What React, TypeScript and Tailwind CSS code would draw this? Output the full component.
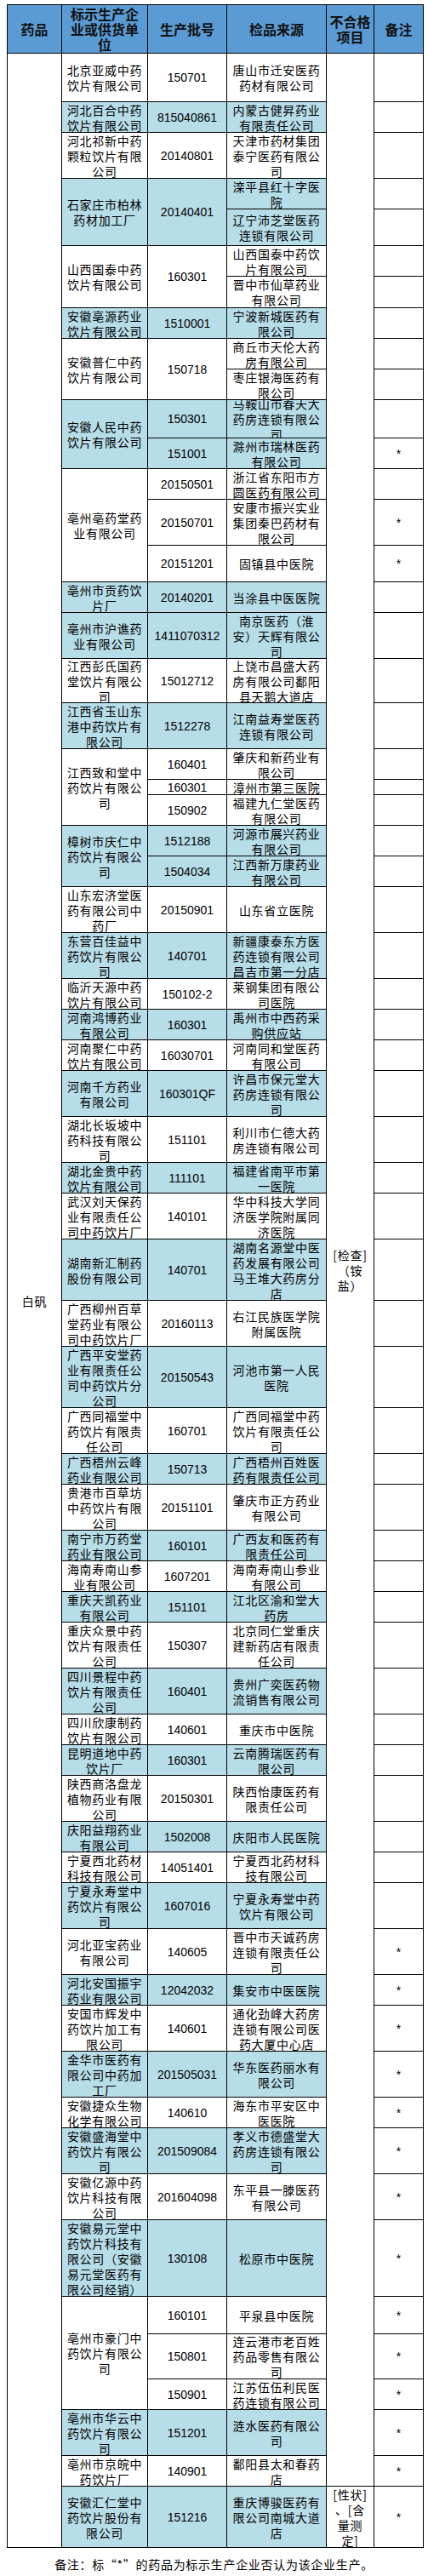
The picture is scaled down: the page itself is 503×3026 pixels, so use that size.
import React from 'react';

type Sub = { b?: string; bs?: number; src: string; star?: boolean };
type Co = { n: string; s: boolean; subs: Sub[] };

const DATA: Co[] = [
  { n: '北京亚威中药|饮片有限公司', s: false, subs: [{ b: '150701', src: '唐山市迁安医药|药材有限公司' }] },
  { n: '河北百合中药|饮片有限公司', s: true, subs: [{ b: '815040861', src: '内蒙古健昇药业|有限责任公司' }] },
  { n: '河北祁新中药|颗粒饮片有限|公司', s: false, subs: [{ b: '20140801', src: '天津市药材集团|泰宁医药有限公|司' }] },
  { n: '石家庄市柏林|药材加工厂', s: true, subs: [{ b: '20140401', bs: 2, src: '滦平县红十字医|院' }, { src: '辽宁沛芝堂医药|连锁有限公司' }] },
  { n: '山西国泰中药|饮片有限公司', s: false, subs: [{ b: '160301', bs: 2, src: '山西国泰中药饮|片有限公司' }, { src: '晋中市仙草药业|有限公司' }] },
  { n: '安徽亳源药业|饮片有限公司', s: true, subs: [{ b: '1510001', src: '宁波新城医药有|限公司' }] },
  { n: '安徽普仁中药|饮片有限公司', s: false, subs: [{ b: '150718', bs: 2, src: '商丘市天伦大药|房有限公司' }, { src: '枣庄银海医药有|限公司' }] },
  { n: '安徽人民中药|饮片有限公司', s: true, subs: [{ b: '150301', src: '马鞍山市春天大|药房连锁有限公|司' }, { b: '151001', src: '滁州市瑞林医药|有限公司', star: true }] },
  { n: '亳州亳药堂药|业有限公司', s: false, subs: [{ b: '20150501', src: '浙江省东阳市方|圆医药有限公司' }, { b: '20150701', src: '安康市振兴实业|集团秦巴药材有|限公司', star: true }, { b: '20151201', src: '固镇县中医院', star: true }] },
  { n: '亳州市贡药饮|片厂', s: true, subs: [{ b: '20140201', src: '当涂县中医医院' }] },
  { n: '亳州市沪谯药|业有限公司', s: true, subs: [{ b: '1411070312', src: '南京医药（淮|安）天辉有限公|司' }] },
  { n: '江西彭氏国药|堂饮片有限公|司', s: false, subs: [{ b: '15012712', src: '上饶市昌盛大药|房有限公司鄱阳|县天鹅大道店' }] },
  { n: '江西省玉山东|港中药饮片有|限公司', s: true, subs: [{ b: '1512278', src: '江南益寿堂医药|连锁有限公司' }] },
  { n: '江西致和堂中|药饮片有限公|司', s: false, subs: [{ b: '160401', src: '肇庆和新药业有|限公司' }, { b: '160301', src: '漳州市第三医院' }, { b: '150902', src: '福建九仁堂医药|有限公司' }] },
  { n: '樟树市庆仁中|药饮片有限公|司', s: true, subs: [{ b: '1512188', src: '河源市展兴药业|有限公司' }, { b: '1504034', src: '江西新万康药业|有限公司' }] },
  { n: '山东宏济堂医|药有限公司中|药厂', s: false, subs: [{ b: '20150901', src: '山东省立医院' }] },
  { n: '东营百佳益中|药饮片有限公|司', s: true, subs: [{ b: '140701', src: '新疆康泰东方医|药连锁有限公司|昌吉市第一分店' }] },
  { n: '临沂天源中药|饮片有限公司', s: false, subs: [{ b: '150102-2', src: '莱钢集团有限公|司医院' }] },
  { n: '河南鸿博药业|有限公司', s: true, subs: [{ b: '160301', src: '禹州市中西药采|购供应站' }] },
  { n: '河南聚仁中药|饮片有限公司', s: false, subs: [{ b: '16030701', src: '河南同和堂医药|有限公司' }] },
  { n: '河南千方药业|有限公司', s: true, subs: [{ b: '160301QF', src: '许昌市保元堂大|药房连锁有限公|司' }] },
  { n: '湖北长坂坡中|药科技有限公|司', s: false, subs: [{ b: '151101', src: '利川市仁德大药|房连锁有限公司' }] },
  { n: '湖北金贵中药|饮片有限公司', s: true, subs: [{ b: '111101', src: '福建省南平市第|一医院' }] },
  { n: '武汉刘天保药|业有限责任公|司中药饮片厂', s: false, subs: [{ b: '140101', src: '华中科技大学同|济医学院附属同|济医院' }] },
  { n: '湖南新汇制药|股份有限公司', s: true, subs: [{ b: '140701', src: '湖南名源堂中医|药发展有限公司|马王堆大药房分|店' }] },
  { n: '广西柳州百草|堂药业有限公|司中药饮片厂', s: false, subs: [{ b: '20160113', src: '右江民族医学院|附属医院' }] },
  { n: '广西平安堂药|业有限责任公|司中药饮片分|公司', s: true, subs: [{ b: '20150543', src: '河池市第一人民|医院' }] },
  { n: '广西同福堂中|药饮片有限责|任公司', s: false, subs: [{ b: '160701', src: '广西同福堂中药|饮片有限责任公|司' }] },
  { n: '广西梧州云峰|药业有限公司', s: true, subs: [{ b: '150713', src: '广西梧州百姓医|药有限责任公司' }] },
  { n: '贵港市百草坊|中药饮片有限|公司', s: false, subs: [{ b: '20151101', src: '肇庆市正方药业|有限公司' }] },
  { n: '南宁市万药堂|药业有限公司', s: true, subs: [{ b: '160101', src: '广西友和医药有|限责任公司' }] },
  { n: '海南寿南山参|业有限公司', s: false, subs: [{ b: '1607201', src: '海南寿南山参业|有限公司' }] },
  { n: '重庆天凯药业|有限公司', s: true, subs: [{ b: '151101', src: '江北区渝和堂大|药房' }] },
  { n: '重庆众景中药|饮片有限责任|公司', s: false, subs: [{ b: '150307', src: '北京同仁堂重庆|建新药店有限责|任公司' }] },
  { n: '四川景程中药|饮片有限责任|公司', s: true, subs: [{ b: '160401', src: '贵州广奕医药物|流销售有限公司' }] },
  { n: '四川欣康制药|饮片有限公司', s: false, subs: [{ b: '140601', src: '重庆市中医院' }] },
  { n: '昆明道地中药|饮片厂', s: true, subs: [{ b: '160301', src: '云南腾瑞医药有|限公司' }] },
  { n: '陕西商洛盘龙|植物药业有限|公司', s: false, subs: [{ b: '20150301', src: '陕西怡康医药有|限责任公司' }] },
  { n: '庆阳益翔药业|有限公司', s: true, subs: [{ b: '1502008', src: '庆阳市人民医院' }] },
  { n: '宁夏西北药材|科技有限公司', s: false, subs: [{ b: '14051401', src: '宁夏西北药材科|技有限公司' }] },
  { n: '宁夏永寿堂中|药饮片有限公|司', s: true, subs: [{ b: '1607016', src: '宁夏永寿堂中药|饮片有限公司' }] },
  { n: '河北亚宝药业|有限公司', s: false, subs: [{ b: '140605', src: '晋中市天诚药房|连锁有限责任公|司', star: true }] },
  { n: '河北安国振宇|药业有限公司', s: true, subs: [{ b: '12042032', src: '集安市中医医院', star: true }] },
  { n: '安国市辉发中|药饮片加工有|限公司', s: false, subs: [{ b: '140601', src: '通化劲峰大药房|连锁有限公司医|药大厦中心店', star: true }] },
  { n: '金华市医药有|限公司中药加|工厂', s: true, subs: [{ b: '201505031', src: '华东医药丽水有|限公司', star: true }] },
  { n: '安徽捷众生物|化学有限公司', s: false, subs: [{ b: '140610', src: '海东市平安区中|医医院', star: true }] },
  { n: '安徽盛海堂中|药饮片有限公|司', s: true, subs: [{ b: '201509084', src: '孝义市德盛堂大|药房连锁有限公|司', star: true }] },
  { n: '安徽亿源中药|饮片科技有限|公司', s: false, subs: [{ b: '201604098', src: '东平县一滕医药|有限公司', star: true }] },
  { n: '安徽易元堂中|药饮片科技有|限公司（安徽|易元堂医药有|限公司经销）', s: true, subs: [{ b: '130108', src: '松原市中医院', star: true }] },
  { n: '亳州市豪门中|药饮片有限公|司', s: false, subs: [{ b: '160101', src: '平泉县中医院', star: true }, { b: '150801', src: '连云港市老百姓|药品零售有限公|司', star: true }, { b: '150901', src: '江苏伍伍利民医|药连锁有限公司', star: true }] },
  { n: '亳州市华云中|药饮片有限公|司', s: true, subs: [{ b: '151201', src: '涟水医药有限公|司', star: true }] },
  { n: '亳州市京皖中|药饮片厂', s: false, subs: [{ b: '140901', src: '鄱阳县太和春药|店', star: true }] },
  { n: '安徽汇仁堂中|药饮片股份有|限公司', s: true, subs: [{ b: '151216', src: '重庆博骏医药有|限公司南城大道|店', star: true }] },
];

const SPAN: Record<number, string> = {
  1: 'row-span-1',
  2: 'row-span-2',
  3: 'row-span-3',
};

const CELL =
  'flex items-center justify-center text-center overflow-hidden border-r border-b border-black leading-[18px]';
const CJK = "font-['Noto_Sans_CJK_SC',sans-serif] text-[14px] tracking-[0.7px]";
const NUM = "font-['Liberation_Sans','Noto_Sans_CJK_SC',sans-serif] text-[14px]";

function Lines({ t }: { t: string }) {
  return (
    <div>
      {t.split('|').map((l, i) => (
        <div key={i} className="whitespace-nowrap">
          {l}
        </div>
      ))}
    </div>
  );
}

export default function App() {
  const totalSubs = DATA.reduce((a, c) => a + c.subs.length, 0);
  const cells: React.ReactNode[] = [];
  let rowIdx = 0;
  DATA.forEach((co, ci) => {
    const bg = co.s ? 'bg-[#b7dde8]' : 'bg-white';
    co.subs.forEach((sub, si) => {
      if (rowIdx === 0) {
        cells.push(
          <div key="drug" className={`${CELL} ${CJK} row-span-64 bg-white`}>
            白矾
          </div>
        );
      }
      if (si === 0) {
        cells.push(
          <div key={`c${ci}`} className={`${CELL} ${CJK} ${SPAN[co.subs.length]} ${bg}`}>
            <Lines t={co.n} />
          </div>
        );
      }
      if (sub.b !== undefined) {
        cells.push(
          <div key={`b${ci}-${si}`} className={`${CELL} ${NUM} ${SPAN[sub.bs ?? 1]} ${bg}`}>
            {sub.b}
          </div>
        );
      }
      cells.push(
        <div key={`s${ci}-${si}`} className={`${CELL} ${CJK} ${bg}`}>
          <Lines t={sub.src} />
        </div>
      );
      if (rowIdx === 0) {
        cells.push(
          <div key="fail1" className={`${CELL} ${CJK} row-span-63 bg-white`}>
            <Lines t="[检查]|（铵|盐）" />
          </div>
        );
      }
      if (rowIdx === totalSubs - 1) {
        cells.push(
          <div key="fail2" className={`${CELL} ${CJK} bg-white`}>
            <Lines t="[性状]|、[含|量测|定]" />
          </div>
        );
      }
      cells.push(
        <div key={`r${ci}-${si}`} className={`${CELL} ${NUM} bg-white`}>
          {sub.star ? '*' : ''}
        </div>
      );
      rowIdx++;
    });
  });

  const HEAD =
    "flex items-center justify-center text-center border-r border-b border-black bg-[#5b9bd5] font-['Noto_Sans_CJK_SC',sans-serif] font-bold text-[16px] leading-[18px] text-[#111]";

  return (
    <div className="w-[503px] bg-white pt-[5px] pb-[14px] text-black">
      <div className="ml-[8px] w-[490px] border-l border-t border-black grid grid-cols-[64px_101px_93px_117px_56px_58px] grid-rows-[57px_57px_36px_54px_36px_43px_36px_37px_36px_36px_36px_45px_36px_36px_54px_43px_36px_54px_52px_54px_36px_18px_36px_36px_36px_54px_54px_36px_36px_36px_54px_54px_36px_54px_72px_54px_72px_54px_36px_54px_36px_36px_36px_54px_54px_36px_36px_54px_36px_36px_54px_54px_36px_54px_54px_36px_54px_54px_90px_44px_53px_36px_54px_36px_72px]">
        <div className={HEAD}>药品</div>
        <div className={HEAD}>
          <Lines t="标示生产企|业或供货单|位" />
        </div>
        <div className={HEAD}>生产批号</div>
        <div className={HEAD}>检品来源</div>
        <div className={HEAD}>
          <Lines t="不合格|项目" />
        </div>
        <div className={HEAD}>备注</div>
        {cells}
      </div>
      <div className={`mt-[10px] text-center leading-[18px] ${CJK} tracking-[0.4px]`}>
        备注：标“*”的药品为标示生产企业否认为该企业生产。
      </div>
    </div>
  );
}
